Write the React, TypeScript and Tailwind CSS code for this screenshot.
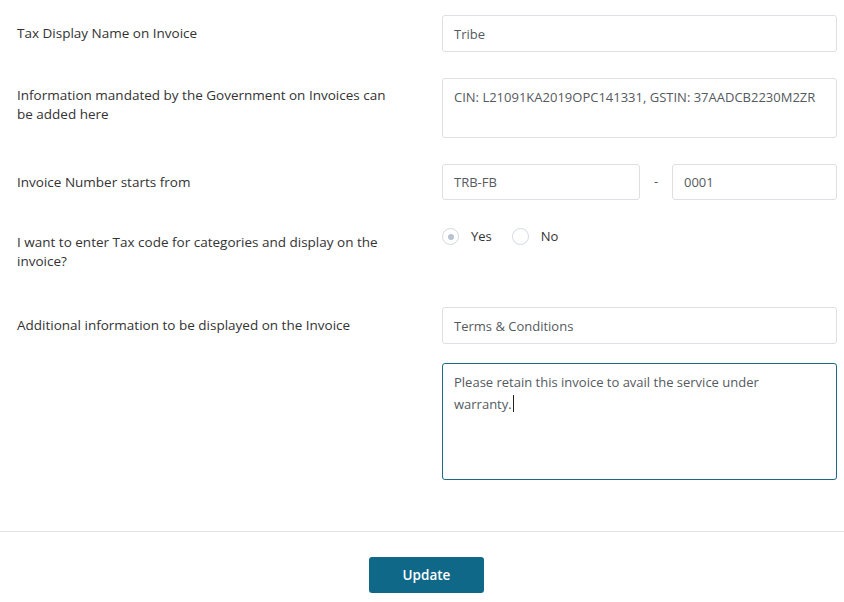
import React from "react";

const font = { fontFamily: '"Open Sans", "Liberation Sans", sans-serif' };

const Label = ({ children, className = "" }: { children: React.ReactNode; className?: string }) => (
  <div className={`text-[13.5px] leading-[19px] text-[#333333] ${className}`}>{children}</div>
);

const inputCls =
  "h-[37px] w-full rounded-[3px] border border-[#dedfe3] bg-white px-[11px] text-[13px] text-[#555a60] outline-none";

const Radio = ({ checked, label }: { checked?: boolean; label: string }) => (
  <label className="flex items-center gap-[12px] text-[13px] text-[#333333]">
    <span className="flex h-[17px] w-[17px] items-center justify-center rounded-full border border-[#d3d8e0] bg-white">
      {checked && <span className="h-[6px] w-[6px] rounded-full bg-[#b9c2cf]" />}
    </span>
    {label}
  </label>
);

export default function App() {
  return (
    <div className="min-h-[602px] w-[844px] bg-white" style={font}>
      <div className="pl-[17px] pr-[8px] pt-[15px]">
        <div className="grid grid-cols-[425px_395px] items-center">
          <Label>Tax Display Name on Invoice</Label>
          <input className={inputCls} defaultValue="Tribe" />
        </div>

        <div className="mt-[26px] grid grid-cols-[425px_395px] items-start">
          <Label className="max-w-[382px] pt-[8px]">Information mandated by the Government on Invoices can be added here</Label>
          <textarea
            className="h-[60px] w-full resize-none rounded-[3px] border border-[#dedfe3] bg-white px-[11px] pt-[9px] text-[13px] leading-[19px] text-[#555a60] outline-none"
            defaultValue="CIN: L21091KA2019OPC141331, GSTIN: 37AADCB2230M2ZR"
          />
        </div>

        <div className="mt-[26px] grid grid-cols-[425px_395px] items-center">
          <Label>Invoice Number starts from</Label>
          <div className="flex items-center">
            <input className={`${inputCls} !w-[198px] !h-[36px]`} defaultValue="TRB-FB" />
            <span className="w-[32px] text-center text-[13px] text-[#555a60]">-</span>
            <input className={`${inputCls} !w-[165px] !h-[36px]`} defaultValue="0001" />
          </div>
        </div>

        <div className="mt-[26px] grid h-[81px] grid-cols-[425px_395px] items-start">
          <Label className="max-w-[382px] pt-[7px]">I want to enter Tax code for categories and display on the invoice?</Label>
          <div className="flex items-center gap-[20px] pt-[1px]">
            <Radio checked label="Yes" />
            <Radio label="No" />
          </div>
        </div>

        <div className="grid grid-cols-[425px_395px] items-center">
          <Label>Additional information to be displayed on the Invoice</Label>
          <input className={inputCls} defaultValue="Terms & Conditions" />
        </div>

        <div className="mt-[19px] grid grid-cols-[425px_395px]">
          <div />
          <div className="h-[117px] w-full rounded-[3px] border border-[#1b6a8a] bg-white px-[11px] pt-[9px] text-[13px] leading-[19px] text-[#555a60]">
            Please retain this invoice to avail the service under
            <br />
            warranty.<span className="ml-[1px] inline-block h-[17px] w-px translate-y-[3px] bg-[#222]" />
          </div>
        </div>
      </div>

      <div className="mt-[51px] border-t border-[#e3e3e3]" />

      <div className="flex justify-center pl-[17px] pr-[8px] pt-[25px]">
        <button className="h-[36px] w-[115px] rounded-[3px] bg-[#106888] text-[13.5px] font-semibold text-white">
          Update
        </button>
      </div>
    </div>
  );
}
